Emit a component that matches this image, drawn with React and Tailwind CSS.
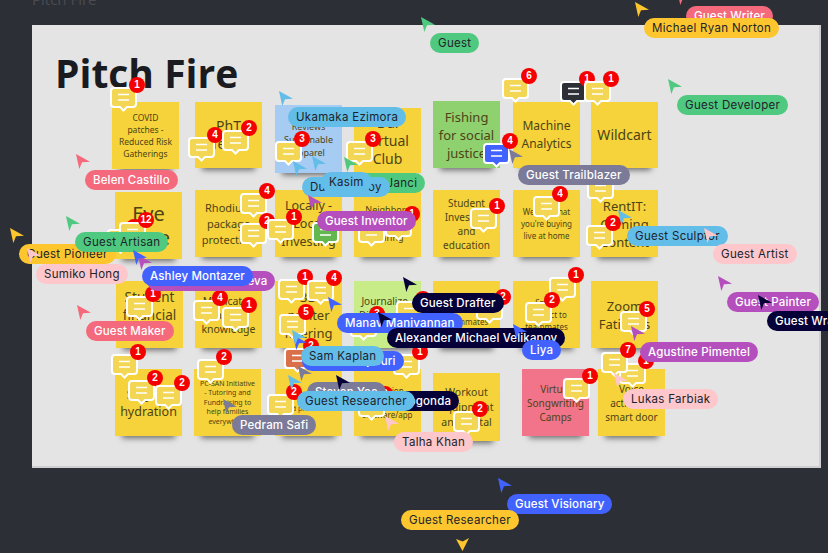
// Pitch Fire board: stickies, comment pins and live cursors sit on a free canvas
const YELLOW = "#f6d33a";
const SKY = "#62bde9";
const GREEN = "#4fc97f";
const GOLD = "#fdc62e";
const RED = "#f5697c";
const BLUE = "#4262ff";
const PURPLE = "#b54fbd";
const GRAY = "#7b7a98";
const NAVY = "#050038";
const PINK = "#fdc7cb";

const stickies = [
  { x: 112, y: 102, h: 67, text: "COVID patches - Reduced Risk Gatherings", size: "text-[8.5px] leading-[12px] px-[5px]" },
  { x: 195, y: 102, h: 66, text: "PhT Team", size: "text-[14px] leading-[18px] px-2" },
  { x: 275, y: 105, h: 68, color: "#a6ccf3", text: "Reviews Sustainable Apparel", size: "text-[9px] leading-[13px] px-1" },
  { x: 354, y: 108, h: 65, text: "Dai Virtual Club", size: "text-[14px] leading-[18px] px-2" },
  { x: 433, y: 101, h: 67, color: "#8fd06f", text: "Fishing for social justice", size: "text-[13px] leading-[18px] px-1" },
  { x: 513, y: 102, h: 66, text: "Machine Analytics", size: "text-[12px] leading-[18px] px-1" },
  { x: 591, y: 102, h: 66, text: "Wildcart", size: "text-[14px] leading-[18px]" },

  { x: 115, y: 192, h: 67, text: "Eye Care", size: "text-[20px] leading-[24px] px-1" },
  { x: 195, y: 190, h: 67, text: "Rhodium package protection", size: "text-[11px] leading-[16px] px-1" },
  { x: 275, y: 190, h: 67, text: "Locally - Local Investing", size: "text-[12.5px] leading-[18px] px-1" },
  { x: 354, y: 190, h: 67, text: "Neighbors helping & sharing", size: "text-[9px] leading-[14px] px-1" },
  { x: 433, y: 190, h: 67, text: "Student Investing and education", size: "text-[10px] leading-[14px] px-1" },
  { x: 513, y: 190, h: 67, text: "We see what you're buying live at home", size: "text-[8px] leading-[12px] px-[5px]" },
  { x: 591, y: 190, h: 67, text: "RentIT: Gaming Content", size: "text-[13px] leading-[18px] px-1" },

  { x: 116, y: 281, h: 67, text: "Student financial aid", size: "text-[13.5px] leading-[18px] px-1" },
  { x: 195, y: 281, h: 67, text: "Medicate - Sharing knowledge", size: "text-[10.5px] leading-[14px] px-1" },
  { x: 275, y: 281, h: 67, text: "3D printer filtering", size: "text-[13px] leading-[18px] px-1" },
  { x: 354, y: 281, h: 67, color: "#c8ec87", text: "Journalize - Dictate your Journal", size: "text-[10px] leading-[14px] px-1" },
  { x: 433, y: 281, h: 67, text: "Dinner with roommates", size: "text-[8px] leading-[13px] px-1" },
  { x: 513, y: 281, h: 67, text: "Smart contract to teammates", size: "text-[8px] leading-[12px] px-2" },
  { x: 591, y: 281, h: 67, text: "Zoom Fatigues", size: "text-[13px] leading-[18px] px-1" },

  { x: 115, y: 369, h: 67, text: "Stay on hydration", size: "text-[12.5px] leading-[17px] px-1" },
  { x: 194, y: 369, h: 67, text: "PC-SAN Initiative - Tutoring and Fundraising to help families everywhere", size: "text-[7px] leading-[9.5px] px-[5px]" },
  { x: 275, y: 369, h: 67, text: "NextStep care and prevention", size: "text-[7px] leading-[11px] px-2" },
  { x: 354, y: 369, h: 67, text: "Vacation rentals software/app", size: "text-[8px] leading-[12px] px-1" },
  { x: 433, y: 373, h: 68, text: "Workout equipment and rental", size: "text-[10.5px] leading-[15px] px-1" },
  { x: 522, y: 369, h: 67, color: "#f2748b", text: "Virtual Songwriting Camps", size: "text-[10px] leading-[14px] px-1" },
  { x: 598, y: 369, h: 67, text: "Voice activated smart door", size: "text-[10px] leading-[14px] px-1" },
];

const pins = [
  { x: 110, y: 87, n: 1 }, { x: 188, y: 137, n: 4 }, { x: 222, y: 130, n: 2 },
  { x: 275, y: 141, n: 3 }, { x: 346, y: 141, n: 3 }, { x: 502, y: 78, n: 6 },
  { x: 483, y: 143, n: 4, fill: "#4262ff" }, { x: 560, y: 81, n: 1, fill: "#2d2f36" },
  { x: 584, y: 81, n: 1 },
  { x: 107, y: 229, n: 7 }, { x: 119, y: 222, n: 12 },
  { x: 240, y: 193, n: 4 }, { x: 240, y: 223, n: 2 }, { x: 267, y: 219, n: 1 },
  { x: 312, y: 222, n: 1, fill: "#62b84e" }, { x: 358, y: 222, n: 1 }, { x: 385, y: 216, n: 1 },
  { x: 470, y: 208, n: 1 }, { x: 533, y: 196, n: 4 }, { x: 587, y: 178, n: 1 },
  { x: 586, y: 225, n: 2 },
  { x: 126, y: 296, n: 1 }, { x: 193, y: 300, n: 4 }, { x: 222, y: 307, n: 1 },
  { x: 278, y: 279, n: 1 }, { x: 307, y: 280, n: 4 }, { x: 279, y: 314, n: 5 },
  { x: 350, y: 316, n: 3 }, { x: 396, y: 301, n: 1 }, { x: 476, y: 299, n: 2 },
  { x: 549, y: 277, n: 1 }, { x: 525, y: 302, n: 2 }, { x: 620, y: 311, n: 5 },
  { x: 284, y: 348, n: 2, fill: "#d9704a" },
  { x: 111, y: 354, n: 1 }, { x: 128, y: 380, n: 2 }, { x: 155, y: 385, n: 2 },
  { x: 197, y: 359, n: 2 }, { x: 267, y: 394, n: 2 }, { x: 358, y: 396, n: 2 },
  { x: 393, y: 354, n: 1 }, { x: 453, y: 411, n: 2 }, { x: 563, y: 378, n: 1 },
  { x: 619, y: 363, n: 1 }, { x: 601, y: 352, n: 7 },
];

// back to front; x,y is the cursor tip, the name tag hangs 9px right and 16px below it
const users = [
  { name: "Guest Writer", color: RED, x: 677, y: -10 },
  { name: "Michael Ryan Norton", color: GOLD, x: 635, y: 2 },
  { name: "Guest", color: GREEN, x: 421, y: 17 },
  { name: "Guest Developer", color: GREEN, x: 668, y: 79 },
  { name: "Ukamaka Ezimora", color: SKY, x: 279, y: 91 },
  { name: "Guest Trailblazer", color: GRAY, x: 509, y: 149 },
  { name: "Belen Castillo", color: RED, x: 76, y: 154 },
  { name: "Rob Janci", color: GREEN, x: 344, y: 157 },
  { name: "Dustin Leroy", color: SKY, x: 293, y: 161 },
  { name: "Kasim", color: SKY, x: 312, y: 156 },
  { name: "Guest Inventor", color: PURPLE, x: 308, y: 195 },
  { name: "Guest Pioneer", color: GOLD, x: 10, y: 228 },
  { name: "Guest Artisan", color: GREEN, x: 66, y: 216 },
  { name: "Sumiko Hong", color: PINK, x: 27, y: 248 },
  { name: "Anastasia Andreeva", color: PURPLE, x: 138, y: 255 },
  { name: "Ashley Montazer", color: BLUE, x: 133, y: 250 },
  { name: "Guest Maker", color: RED, x: 77, y: 305 },
  { name: "Guest Drafter", color: NAVY, x: 403, y: 277 },
  { name: "Manav Manivannan", color: BLUE, x: 328, y: 297 },
  { name: "Alexander Michael Velikanov", color: NAVY, x: 378, y: 312 },
  { name: "Liya", color: BLUE, x: 513, y: 324 },
  { name: "Vikram Raj Suri", color: BLUE, x: 293, y: 335 },
  { name: "Sam Kaplan", color: SKY, x: 292, y: 330 },
  { name: "Guest Sculptor", color: SKY, x: 618, y: 210 },
  { name: "Guest Artist", color: PINK, x: 704, y: 228 },
  { name: "Guest Painter", color: PURPLE, x: 718, y: 276 },
  { name: "Guest Wrangler", color: NAVY, x: 758, y: 295 },
  { name: "Agustine Pimentel", color: PURPLE, x: 631, y: 326 },
  { name: "Lukas Farbiak", color: PINK, x: 614, y: 373 },
  { name: "Pedram Safi", color: GRAY, x: 223, y: 399 },
  { name: "Steven Yee", color: GRAY, x: 298, y: 366 },
  { name: "Mahesh Bogonda", color: NAVY, x: 336, y: 375 },
  { name: "Guest Researcher", color: SKY, x: 288, y: 375 },
  { name: "Talha Khan", color: PINK, x: 385, y: 416 },
  { name: "Guest Visionary", color: BLUE, x: 498, y: 478 },
];

const DARK_TEXT = [SKY, GREEN, GOLD, PINK];

function Sticky({ sticky }) {
  return (
    <div
      className={`absolute w-[67px] flex items-center justify-center text-center text-[#4d4415] font-['Noto_Sans',sans-serif] shadow-[0_9px_6px_-7px_rgba(0,0,0,0.55)] ${sticky.size}`}
      style={{ left: sticky.x, top: sticky.y, height: sticky.h, backgroundColor: sticky.color || YELLOW }}
    >
      {sticky.text}
    </div>
  );
}

function Pin({ pin }) {
  return (
    <div className="absolute w-[27px] h-[25px]" style={{ left: pin.x, top: pin.y }}>
      <svg width="27" height="25" viewBox="0 0 27 25" className="block">
        <path
          d="M4 1H23a3 3 0 0 1 3 3V17a3 3 0 0 1-3 3H17L13.500 23.500 10 20H4a3 3 0 0 1-3-3V4a3 3 0 0 1 3-3Z"
          fill={pin.fill || "#f3d653"}
          stroke="#fff"
          strokeWidth="2"
        />
        <path d="M8 7.500H19M8 13H19" stroke="#fff" strokeWidth="1.500" />
      </svg>
      <span className="absolute -top-[10px] -right-[8px] w-4 h-4 rounded-full bg-[#f40000] text-white text-[10px] leading-4 font-bold text-center font-['Liberation_Sans',sans-serif]">
        {pin.n}
      </span>
    </div>
  );
}

function User({ user }) {
  const dark = DARK_TEXT.includes(user.color);
  return (
    <>
      <svg
        width="15"
        height="16"
        viewBox="0 0 15 16"
        className="absolute"
        style={{ left: user.x, top: user.y }}
      >
        <polygon points="0,0 14,7.700 6,8.300 3.300,15" fill={user.color} />
      </svg>
      <span
        className={`absolute h-5 px-2 rounded-[10px] text-[11.5px] leading-5 whitespace-nowrap font-['Inter',sans-serif] ${
          dark ? "text-[#20232a] tracking-[0.3px]" : "text-white font-medium tracking-[0.15px]"
        }`}
        style={{ left: user.x + 9, top: user.y + 16, backgroundColor: user.color }}
      >
        {user.name}
      </span>
    </>
  );
}

export default function App() {
  return (
    <div className="relative w-[828px] h-[553px] overflow-hidden bg-[#2d2f36] pt-[25px] pl-[32px]">
      <span className="absolute -top-[11px] left-[32px] text-[15px] leading-5 text-[#4a4c52] font-['Open_Sans',sans-serif]">
        Pitch Fire
      </span>
      <div className="w-[789px] h-[443px] bg-[#e4e4e4] border-b-2 border-r-2 border-[#cfcfd1] pl-[23px] pt-[22px]">
        <h1 className="text-[39px] leading-[52px] font-bold text-[#1a1b20] font-['Open_Sans',sans-serif]">
          Pitch Fire
        </h1>
      </div>

      {stickies.map((sticky) => (
        <Sticky key={`${sticky.x}-${sticky.y}`} sticky={sticky} />
      ))}
      {pins.map((pin) => (
        <Pin key={`${pin.x}-${pin.y}`} pin={pin} />
      ))}
      {users.map((user) => (
        <User key={user.name} user={user} />
      ))}

      {/* this one's cursor is pinned below its tag, pointing off the view */}
      <span className="absolute left-[401px] top-[510px] h-5 px-2 rounded-[10px] bg-[#fdc62e] text-[#20232a] text-[11.5px] leading-5 tracking-[0.3px] whitespace-nowrap font-['Inter',sans-serif]">
        Guest Researcher
      </span>
      <svg width="14" height="14" viewBox="0 0 14 14" className="absolute left-[456px] top-[538px]">
        <polygon points="0,1 6.700,3.500 13,0 6.500,13" fill="#fdc62e" />
      </svg>
    </div>
  );
}
